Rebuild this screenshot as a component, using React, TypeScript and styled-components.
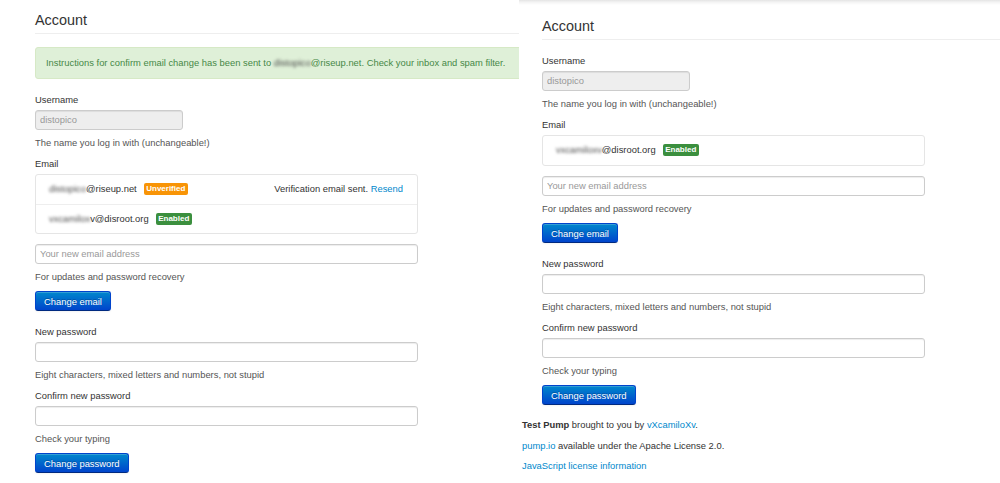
import React from "react"
import styled, { createGlobalStyle } from "styled-components"

const GlobalStyle = createGlobalStyle`
  html, body {
    margin: 0;
    padding: 0;
    background: #ffffff;
  }
  body {
    font-family: "Liberation Sans", Arial, Helvetica, sans-serif;
    font-size: 9.4px;
    line-height: 14px;
    color: #333333;
  }
  * {
    box-sizing: border-box;
  }
`

const Page = styled.div`
  display: flex;
  width: 1000px;
  height: 483px;
  overflow: hidden;
`

const Shot = styled.section<{ $width?: number; $shadow?: boolean }>`
  flex: ${p => (p.$width ? `0 0 ${p.$width}px` : "1 1 auto")};
  display: flex;
  flex-direction: column;
  overflow: hidden;
  background: ${p =>
    p.$shadow
      ? "linear-gradient(to bottom, #e4e4e4 0, #f3f3f3 2px, #ffffff 5px)"
      : "#ffffff"};
`

const Content = styled.div<{ $top: number; $left: number }>`
  display: flex;
  flex-direction: column;
  align-items: flex-start;
  padding: ${p => p.$top}px 0 0 ${p => p.$left}px;
`

const Title = styled.h1`
  align-self: stretch;
  margin: 0;
  padding-bottom: 2px;
  font-size: 14.4px;
  line-height: 21px;
  font-weight: 400;
  color: #333333;
  border-bottom: 1px solid #eeeeee;
`

const Alert = styled.div`
  width: 600px;
  margin-top: 13px;
  padding: 8px 10px;
  line-height: 14px;
  color: #468847;
  background: #dff0d8;
  border: 1px solid #d6e9c6;
  border-radius: 3px;
`

const Label = styled.label<{ $first?: boolean }>`
  display: block;
  height: 14px;
  margin-top: ${p => (p.$first ? "13.5px" : "0")};
  margin-bottom: 3px;
`

const Input = styled.input<{ $width?: number }>`
  width: ${p => p.$width ?? 383}px;
  height: 20px;
  padding: 0 4px;
  font-family: inherit;
  font-size: 9.4px;
  color: #555555;
  background: #ffffff;
  border: 1px solid #cccccc;
  border-radius: 3px;
  box-shadow: inset 0 1px 1px rgba(0, 0, 0, 0.075);
  outline: none;

  &::placeholder {
    color: #999999;
  }

  &:disabled {
    color: #999999;
    background: #eeeeee;
  }
`

const Help = styled.p`
  margin: 6.5px 0;
  height: 14px;
  color: #555555;
`

const Button = styled.button`
  height: 20px;
  margin-top: 0.5px;
  padding: 0 8px;
  font-family: inherit;
  font-size: 9.4px;
  color: #ffffff;
  text-shadow: 0 -1px 0 rgba(0, 0, 0, 0.25);
  background: linear-gradient(to bottom, #0088cc, #0044cc);
  border: 1px solid #0044cc;
  border-bottom-color: #002a80;
  border-radius: 3px;
  box-shadow: inset 0 1px 0 rgba(255, 255, 255, 0.2), 0 1px 2px rgba(0, 0, 0, 0.05);
`

const EmailList = styled.ul`
  width: 383px;
  margin: 0 0 10px;
  padding: 0;
  list-style: none;
  border: 1px solid #e5e5e5;
  border-radius: 3px;
`

const EmailRow = styled.li`
  display: flex;
  align-items: center;
  height: 29px;
  padding: 0 14px 0 13px;

  & + & {
    border-top: 1px solid #eeeeee;
  }
`

const Blurred = styled.span`
  color: #4a4a4a;
  filter: blur(1.4px);
`

const Badge = styled.span<{ $tone: "warning" | "success" }>`
  display: inline-block;
  margin-left: 7px;
  padding: 0 2.5px;
  font-size: 8px;
  line-height: 12px;
  font-weight: 700;
  color: #ffffff;
  border-radius: 2px;
  background: ${p => (p.$tone === "warning" ? "#f89406" : "#3b8f3e")};
`

const RowNote = styled.span`
  margin-left: auto;
`

const Link = styled.a`
  color: #0088cc;
  text-decoration: none;
`

const Footer = styled.footer`
  display: flex;
  flex-direction: column;
  gap: 6.5px;
  padding: 13px 0 0 3px;
`

const FooterLine = styled.p`
  margin: 0;
  height: 14px;
`

type Email = {
  name: string
  domain: string
  status: "Unverified" | "Enabled"
  note?: boolean
}

const PasswordFields = () => (
  <>
    <Label $first>New password</Label>
    <Input type="password" />
    <Help>Eight characters, mixed letters and numbers, not stupid</Help>
    <Label>Confirm new password</Label>
    <Input type="password" />
    <Help>Check your typing</Help>
    <Button>Change password</Button>
  </>
)

const AccountForm = ({ emails, alert }: { emails: Email[]; alert?: boolean }) => (
  <>
    {alert && (
      <Alert>
        Instructions for confirm email change has been sent to <Blurred>distopico</Blurred>
        @riseup.net. Check your inbox and spam filter.
      </Alert>
    )}
    <Label $first>Username</Label>
    <Input $width={148} value="distopico" disabled readOnly />
    <Help>The name you log in with (unchangeable!)</Help>
    <Label>Email</Label>
    <EmailList>
      {emails.map(e => (
        <EmailRow key={e.name + e.domain}>
          <Blurred>{e.name}</Blurred>
          {e.domain}
          <Badge $tone={e.status === "Unverified" ? "warning" : "success"}>{e.status}</Badge>
          {e.note && (
            <RowNote>
              Verification email sent. <Link href="#">Resend</Link>
            </RowNote>
          )}
        </EmailRow>
      ))}
    </EmailList>
    <Input placeholder="Your new email address" />
    <Help>For updates and password recovery</Help>
    <Button>Change email</Button>
    <PasswordFields />
  </>
)

export default function App() {
  return (
    <>
      <GlobalStyle />
      <Page>
        <Shot $width={519}>
          <Content $top={10} $left={35}>
            <Title>Account</Title>
            <AccountForm
              alert
              emails={[
                { name: "distopico", domain: "@riseup.net", status: "Unverified", note: true },
                { name: "vxcamilox", domain: "v@disroot.org", status: "Enabled" },
              ]}
            />
          </Content>
        </Shot>
        <Shot $shadow>
          <Content $top={16} $left={23}>
            <Title>Account</Title>
            <AccountForm
              emails={[{ name: "vxcamiloxv", domain: "@disroot.org", status: "Enabled" }]}
            />
          </Content>
          <Footer>
            <FooterLine>
              <strong>Test Pump</strong> brought to you by <Link href="#">vXcamiloXv</Link>.
            </FooterLine>
            <FooterLine>
              <Link href="#">pump.io</Link> available under the Apache License 2.0.
            </FooterLine>
            <FooterLine>
              <Link href="#">JavaScript license information</Link>
            </FooterLine>
          </Footer>
        </Shot>
      </Page>
    </>
  )
}
